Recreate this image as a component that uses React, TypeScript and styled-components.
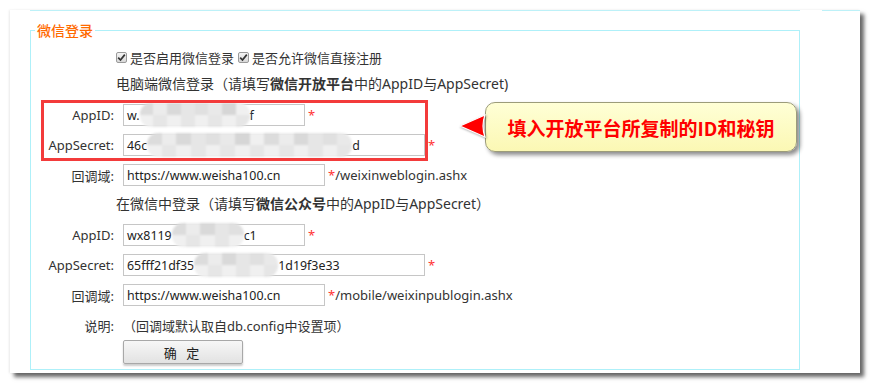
import React from 'react';
import styled, {createGlobalStyle} from "styled-components";

const GlobalStyle = createGlobalStyle`
  html, body {
    margin: 0;
    padding: 0;
    background: #ffffff;
  }
  body {
    font-family: "Noto Sans", "Noto Sans CJK SC", sans-serif;
    font-size: 13px;
    color: #333;
  }
`

const MOSAIC_COLORS = ["#dcdcdc", "#e6e6e6", "#d6d6d6", "#ececec", "#e0e0e0", "#f0f0f0", "#d9d9d9", "#e9e9e9"];

const Mosaic = ({width}: { width: number }) => {
    const cols = Math.ceil(width / 15);
    const cells = [];
    for (let r = 0; r < 2; r++) {
        for (let c = 0; c < cols; c++) {
            cells.push(<MosaicCell key={r + "-" + c} color={MOSAIC_COLORS[(c * 3 + r * 5 + c * r) % MOSAIC_COLORS.length]}/>);
        }
    }
    return (
        <StyledMosaic style={{width: width, gridTemplateColumns: `repeat(${cols}, 1fr)`}}>
            {cells}
        </StyledMosaic>
    );
};

const CheckBox = () => (
    <StyledCheck>
        <svg width="9" height="9" viewBox="0 0 9 9">
            <path d="M1.2 4.6 L3.5 7 L7.8 1.6" fill="none" stroke="#333" strokeWidth="1.7"/>
        </svg>
    </StyledCheck>
);

type FieldRowProps = {
    label: string;
    width: number;
    suffix?: string;
    children: React.ReactNode;
}

const FieldRow = ({label, width, suffix, children}: FieldRowProps) => (
    <Row>
        <Label>{label}</Label>
        <Field width={width}>{children}</Field>
        <Star>*</Star>
        {suffix && <Suffix>{suffix}</Suffix>}
    </Row>
);

export default function App() {
    return (
        <>
            <GlobalStyle/>
            <Page>
                <Panel>
                    <TopRule>
                        <RuleSegment width={770}/>
                        <RuleGap/>
                        <RuleSegment width={38}/>
                    </TopRule>
                    <Fieldset>
                        <Legend>微信登录</Legend>
                        <CheckRow>
                            <CheckItem><CheckBox/>是否启用微信登录</CheckItem>
                            <CheckItem><CheckBox/>是否允许微信直接注册</CheckItem>
                        </CheckRow>
                        <Heading>电脑端微信登录（请填写<b>微信开放平台</b>中的AppID与AppSecret)</Heading>
                        <FieldRow label="AppID:" width={182}>
                            w.<Mosaic width={110}/>f
                        </FieldRow>
                        <FieldRow label="AppSecret:" width={302}>
                            46c<Mosaic width={205}/>d
                        </FieldRow>
                        <FieldRow label="回调域:" width={202} suffix="/weixinweblogin.ashx">
                            https://www.weisha100.cn
                        </FieldRow>
                        <Heading>在微信中登录（请填写<b>微信公众号</b>中的AppID与AppSecret）</Heading>
                        <FieldRow label="AppID:" width={182}>
                            wx8119<Mosaic width={72}/>c1
                        </FieldRow>
                        <FieldRow label="AppSecret:" width={302}>
                            65fff21df35<Mosaic width={84}/>1d19f3e33
                        </FieldRow>
                        <FieldRow label="回调域:" width={202} suffix="/mobile/weixinpublogin.ashx">
                            https://www.weisha100.cn
                        </FieldRow>
                        <Row>
                            <Label>说明:</Label>
                            <Note>（回调域默认取自db.config中设置项）</Note>
                        </Row>
                        <ButtonRow>
                            <SubmitButton>确 定</SubmitButton>
                        </ButtonRow>
                    </Fieldset>
                    <Highlight/>
                    <Callout>
                        <CalloutArrow width="30" height="28" viewBox="0 0 30 28">
                            <path d="M2 14 L27 3 Q23 14 27 25 Z" fill="#ff0000" stroke="#ffffff" strokeWidth="1.2"/>
                        </CalloutArrow>
                        填入开放平台所复制的ID和秘钥
                    </Callout>
                </Panel>
            </Page>
        </>
    );
}

const Page = styled.div`
  padding: 10px;
`
const Panel = styled.div`
  position: relative;
  width: 850px;
  height: 363px;
  background: #ffffff;
  box-shadow: 4px 4px 4px rgba(0, 0, 0, 0.6), -1px 0 2px rgba(0, 0, 0, 0.08);
`
const TopRule = styled.div`
  display: flex;
  height: 1px;
  padding-left: 20px;
`
const RuleSegment = styled.div<{ width: number }>`
  width: ${props => props.width}px;
  height: 1px;
  background: #bdf1f8;
`
const RuleGap = styled.div`
  width: 22px;
`
const Fieldset = styled.fieldset`
  margin: 9px 60px 0 20px;
  padding: 0 0 5px 0;
  border: 1px solid #aef0f9;
  min-width: 0;
`
const Legend = styled.legend`
  margin-left: 4px;
  padding: 0 2px;
  font-family: "Noto Sans CJK SC", sans-serif;
  font-size: 14px;
  font-weight: 500;
  line-height: 20px;
  color: #ff6a00;
`
const CheckRow = styled.div`
  display: flex;
  align-items: center;
  gap: 4px;
  height: 25px;
  margin: 5px 0 0 85px;
`
const CheckItem = styled.label`
  display: flex;
  align-items: center;
  gap: 2px;
  line-height: 18px;
`
const StyledCheck = styled.span`
  display: inline-flex;
  align-items: center;
  justify-content: center;
  width: 11px;
  height: 11px;
  box-sizing: border-box;
  border: 1px solid #9a9a9a;
  border-radius: 2px;
  background: linear-gradient(#f4f4f4, #d8d8d8);
  margin-right: 1px;
`
const Heading = styled.div`
  height: 30px;
  line-height: 27px;
  box-sizing: border-box;
  margin-left: 85px;
  font-size: 14px;
  white-space: nowrap;
  b {
    font-weight: 700;
  }
`
const Row = styled.div`
  display: flex;
  align-items: center;
  height: 30px;
`
const Label = styled.span`
  width: 83px;
  margin-right: 9px;
  text-align: right;
  white-space: nowrap;
`
const Field = styled.div<{ width: number }>`
  display: flex;
  align-items: center;
  width: ${props => props.width}px;
  height: 22px;
  box-sizing: border-box;
  padding: 0 3px;
  border: 1px solid #c6c6c6;
  background: #fff;
  font-size: 12.4px;
  color: #222;
  white-space: nowrap;
  overflow: visible;
`
const StyledMosaic = styled.span`
  display: inline-grid;
  grid-template-rows: 1fr 1fr;
  height: 24px;
  margin: -2px 0;
  border-radius: 11px;
  overflow: hidden;
  filter: blur(0.8px);
`
const MosaicCell = styled.span<{ color: string }>`
  background: ${props => props.color};
`
const Star = styled.span`
  color: #ff3333;
  margin-left: 3px;
`
const Suffix = styled.span`
  color: #333;
`
const Note = styled.span`
  white-space: nowrap;
`
const ButtonRow = styled.div`
  padding-left: 92px;
  height: 24px;
`
const SubmitButton = styled.button`
  width: 120px;
  height: 24px;
  border: 1px solid #a8a8a8;
  border-radius: 2px;
  background: linear-gradient(#f7f7f7, #e2e2e2);
  box-shadow: 0 2px 2px rgba(0, 0, 0, 0.2);
  font-family: "Noto Sans", "Noto Sans CJK SC", sans-serif;
  font-size: 13px;
  color: #222;
  padding: 0;
  letter-spacing: 3px;
`
const Highlight = styled.div`
  position: absolute;
  left: 31px;
  top: 90px;
  width: 387px;
  height: 61px;
  box-sizing: border-box;
  border: 3px solid #f33b3b;
`
const Callout = styled.div`
  position: absolute;
  left: 475px;
  top: 92px;
  width: 312px;
  height: 50px;
  box-sizing: border-box;
  display: flex;
  align-items: center;
  justify-content: center;
  border: 1px solid #9c9c7a;
  border-radius: 10px;
  background: linear-gradient(#ffffd6, #fbf8b4);
  box-shadow: 3px 3px 4px rgba(0, 0, 0, 0.45);
  font-family: "Noto Sans CJK SC", sans-serif;
  font-size: 19px;
  font-weight: 700;
  color: #ff0000;
`
const CalloutArrow = styled.svg`
  position: absolute;
  left: -28px;
  top: 9px;
  filter: drop-shadow(1px 1px 1px rgba(0, 0, 0, 0.35));
`
